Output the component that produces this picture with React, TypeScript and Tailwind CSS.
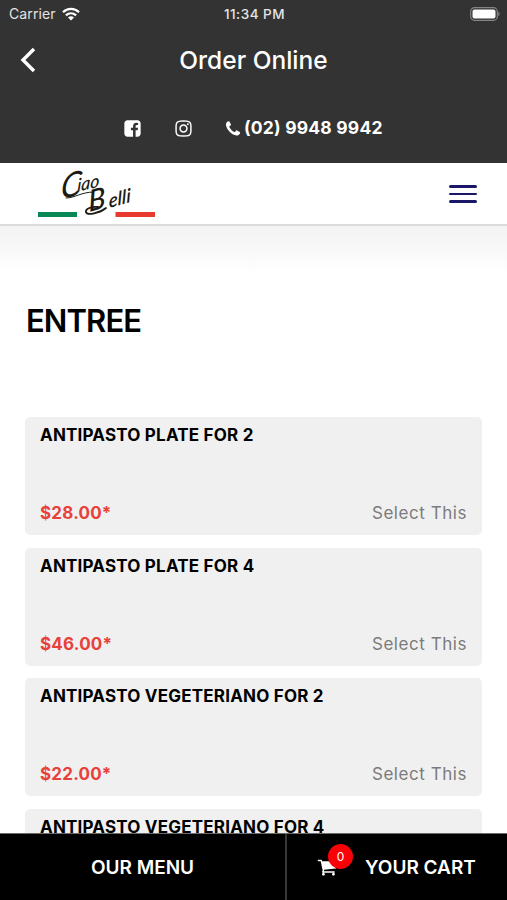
import type { ReactNode } from 'react'

type MenuItem = {
  name: string;
  price?: string;
};

const items: MenuItem[] = [
  { name: 'ANTIPASTO PLATE FOR 2', price: '$28.00*' },
  { name: 'ANTIPASTO PLATE FOR 4', price: '$46.00*' },
  { name: 'ANTIPASTO VEGETERIANO FOR 2', price: '$22.00*' },
  { name: 'ANTIPASTO VEGETERIANO FOR 4' },
];

function Icon({ className, children }: { className: string; children: ReactNode }) {
  return (
    <svg viewBox="0 0 1792 1792" fill="currentColor" className={className}>
      {children}
    </svg>
  );
}

function StatusBar() {
  return (
    <div className="grid h-7 grid-cols-3 items-center pl-[9px] pr-[7px] text-[14px] leading-none text-[#e4e4e4]">
      <div className="flex items-center gap-[6px]">
        <span className="tracking-[0.1px]">Carrier</span>
        <svg viewBox="0 0 18 14" className="h-[14px] w-[18px]" fill="none" stroke="white" strokeWidth="2.3">
          <path d="M1 5.2C5.5.8 12.5.8 17 5.2" />
          <path d="M3.9 8.3c3-2.7 7.2-2.7 10.2 0" />
          <path d="M6 10.4c1.7-1.5 4.3-1.5 6 0L9 13.6z" fill="white" stroke="none" />
        </svg>
      </div>
      <span className="whitespace-nowrap pt-px text-center text-[13.5px] font-medium tracking-[0.5px]">11:34 PM</span>
      <svg viewBox="0 0 30 14" className="mb-px h-[14px] w-[30px] justify-self-end">
        <rect x="0.7" y="0.7" width="26.6" height="12.6" rx="3.8" fill="none" stroke="#858585" strokeWidth="1.2" />
        <rect x="2.5" y="2.5" width="23" height="9" rx="2" fill="white" />
        <path d="M28.3 4.8c1.8.7 1.8 3.7 0 4.4z" fill="#858585" />
      </svg>
    </div>
  );
}

function Logo() {
  return (
    <svg viewBox="0 0 120 54" className="h-[54px] w-[120px] overflow-visible">
      <g fill="#1c1a12" fontFamily="Lato, sans-serif" fontStyle="italic">
        <text transform="translate(23 32) rotate(-12) skewX(-18)" fontSize="33">C</text>
        <text transform="translate(40 25) rotate(-13) skewX(-16)" fontSize="18" fontWeight="500">iao</text>
        <text transform="translate(52 45) rotate(-15) skewX(-12)" fontSize="29" fontWeight="500">B</text>
        <text transform="translate(72 41) rotate(-15) skewX(-14)" fontSize="19" fontWeight="600">elli</text>
        {/* swashes under the two words */}
        <g fill="none" stroke="#1c1a12" strokeLinecap="round">
          <path d="M29 31C38 31 44 25 57 25" strokeWidth="1" />
          <path d="M61 40c-6-1-13 2-12 5 1 4 14 1 20-4" strokeWidth="1.8" />
        </g>
      </g>
      <rect x="1" y="45" width="39" height="5" fill="#078855" />
      <rect x="78.5" y="45" width="39.5" height="5" fill="#e8392e" />
    </svg>
  );
}

function ItemCard({ item }: { item: MenuItem }) {
  return (
    <div className="flex h-[118px] shrink-0 flex-col justify-between rounded-[5px] bg-[#f0f0f0] px-[15px] pb-[10px] pt-[6px]">
      <h3 className="text-[17px] font-bold leading-6 tracking-[0.2px] text-black">{item.name}</h3>
      {item.price && (
        <div className="flex justify-between leading-6">
          <span className="text-[17px] font-bold tracking-[0.2px] text-[#e8413a]">{item.price}</span>
          <button className="text-[17px] tracking-[0.55px] text-[#7b7b7b]">Select This</button>
        </div>
      )}
    </div>
  );
}

export default function App() {
  return (
    <div className="flex h-[900px] w-[507px] flex-col overflow-hidden bg-white font-['Inter',sans-serif]">
      <header className="h-[163px] shrink-0 bg-[#333333] text-white">
        <StatusBar />
        <div className="grid h-[63px] grid-cols-[60px_1fr_60px] items-center">
          <button className="pl-[20px]">
            <svg viewBox="0 0 16 26" className="h-[26px] w-4" fill="none" stroke="white" strokeWidth="3.4">
              <path d="M14 2 3 13l11 11" />
            </svg>
          </button>
          <h1 className="pt-px text-center text-[24.5px] font-medium">Order Online</h1>
        </div>
        <div className="flex h-[75px] items-center pl-[123px]">
          <Icon className="size-[19px]">
            <path d="M1376 128q119 0 203.5 84.5t84.5 203.5v960q0 119-84.5 203.5t-203.5 84.5h-188v-595h199l30-232h-229v-148q0-56 23.5-84t91.5-28l122-1v-207q-63-9-178-9-136 0-217.5 80t-81.5 226v171h-200v232h200v595h-532q-119 0-203.5-84.5t-84.5-203.5v-960q0-119 84.5-203.5t203.5-84.5h960z" />
          </Icon>
          <Icon className="ml-8 size-[19px]">
            <path d="M1152 896q0-106-75-181t-181-75-181 75-75 181 75 181 181 75 181-75 75-181zm138 0q0 164-115 279t-279 115-279-115-115-279 115-279 279-115 279 115 115 279zm108-410q0 38-27 65t-65 27-65-27-27-65 27-65 65-27 65 27 27 65zm-502-220q-7 0-76.5-.5t-105.5 0-96.5 3-103 10-71.5 18.5q-50 20-88 58t-58 88q-11 29-18.5 71.5t-10 103-3 96.5 0 105.5.5 76.5-.5 76.5 0 105.5 3 96.5 10 103 18.5 71.5q20 50 58 88t88 58q29 11 71.5 18.5t103 10 96.5 3 105.5 0 76.5-.5 76.5.5 105.5 0 96.5-3 103-10 71.5-18.5q50-20 88-58t58-88q11-29 18.5-71.5t10-103 3-96.5 0-105.5-.5-76.5.5-76.5 0-105.5-3-96.5-10-103-18.5-71.5q-20-50-58-88t-88-58q-29-11-71.5-18.5t-103-10-96.5-3-105.5 0-76.5.5zm768 630q0 229-5 317-10 208-124 322t-322 124q-88 5-317 5t-317-5q-208-10-322-124t-124-322q-5-88-5-317t5-317q10-208 124-322t322-124q88-5 317-5t317 5q208 10 322 124t124 322q5 88 5 317z" />
          </Icon>
          <a className="ml-[31px] flex items-center gap-[2px] whitespace-nowrap text-[17.5px] font-bold tracking-[0.2px]">
            <Icon className="size-[18px]">
              <path d="M1600 1240q0 27-10 70.5t-21 68.5q-21 50-122 106-94 51-186 51-27 0-53-3.5t-57.5-12.5-47-14.5-55.5-20.5-49-18q-98-35-175-83-127-79-264-216t-216-264q-48-77-83-175-3-9-18-49t-20.5-55.5-14.5-47-12.5-57.5-3.5-53q0-92 51-186 56-101 106-122 25-11 68.5-21t70.5-10q14 0 21 3 18 6 53 76 11 19 30 54t35 63.5 31 53.5q3 4 17.5 25t21.5 35.5 7 28.5q0 20-28.5 50t-62 55-62 53-28.5 46q0 9 5 22.5t8.5 20.5 14 24 11.5 19q76 137 174 235t235 174q2 1 19 11.5t24 14 20.5 8.5 22.5 5q18 0 46-28.5t53-62 55-62 50-28.5q14 0 28.5 7t35.5 21.5 25 17.5q25 15 53.5 31t63.5 35 54 30q70 35 76 53 3 7 3 21z" />
            </Icon>
            (02) 9948 9942
          </a>
        </div>
      </header>

      <nav className="flex h-[63px] shrink-0 items-center justify-between border-b-2 border-[#dcdcdc] bg-white pl-[37px] pr-[30px]">
        <Logo />
        <button className="flex w-[28px] flex-col gap-[5px] pt-px">
          <span className="h-[2.5px] rounded-full bg-[#1b1768]" />
          <span className="h-[2.5px] rounded-full bg-[#1b1768]" />
          <span className="h-[2.5px] rounded-full bg-[#1b1768]" />
        </button>
      </nav>

      <main className="flex min-h-0 flex-1 flex-col overflow-hidden bg-linear-to-b from-[#f3f3f3] to-white to-[48px] px-[25px]">
        <h2 className="mt-[75px] h-10 shrink-0 pl-px text-[31px] font-semibold leading-10 tracking-[-0.9px] text-black">ENTREE</h2>
        <div className="mt-[76px] flex flex-col gap-[12.7px]">
          {items.map((item) => (
            <ItemCard key={item.name} item={item} />
          ))}
        </div>
      </main>

      <footer className="flex h-[67px] shrink-0 border-t border-[#6a6a6a] bg-black text-[19px] font-semibold text-white">
        <button className="w-[285px] pt-[2px]">OUR MENU</button>
        <button className="flex flex-1 items-center border-l-2 border-[#383838] pl-[30px]">
          <span className="relative">
            <Icon className="size-[20px]">
              <path d="M704 1536q0 52-38 90t-90 38-90-38-38-90 38-90 90-38 90 38 38 90zm896 0q0 52-38 90t-90 38-90-38-38-90 38-90 90-38 90 38 38 90zm128-1088v512q0 24-16.5 42.5t-40.5 21.5l-1044 122q13 60 13 70 0 16-24 64h920q26 0 45 19t19 45-19 45-45 19h-1024q-26 0-45-19t-19-45q0-11 8-31.5t16-36 21.5-40 15.5-29.5l-177-823h-204q-26 0-45-19t-19-45 19-45 45-19h256q16 0 28.5 6.5t19.5 15.5 13 24.5 8 26 5.5 29.5 4.5 26h1201q26 0 45 19t19 45z" />
            </Icon>
            <span className="absolute -top-[13px] left-[11px] flex size-[25px] items-center justify-center rounded-full bg-[#fb0007] text-[12px] font-normal">
              0
            </span>
          </span>
          <span className="ml-[28px] pt-[2px]">YOUR CART</span>
        </button>
      </footer>
    </div>
  );
}
